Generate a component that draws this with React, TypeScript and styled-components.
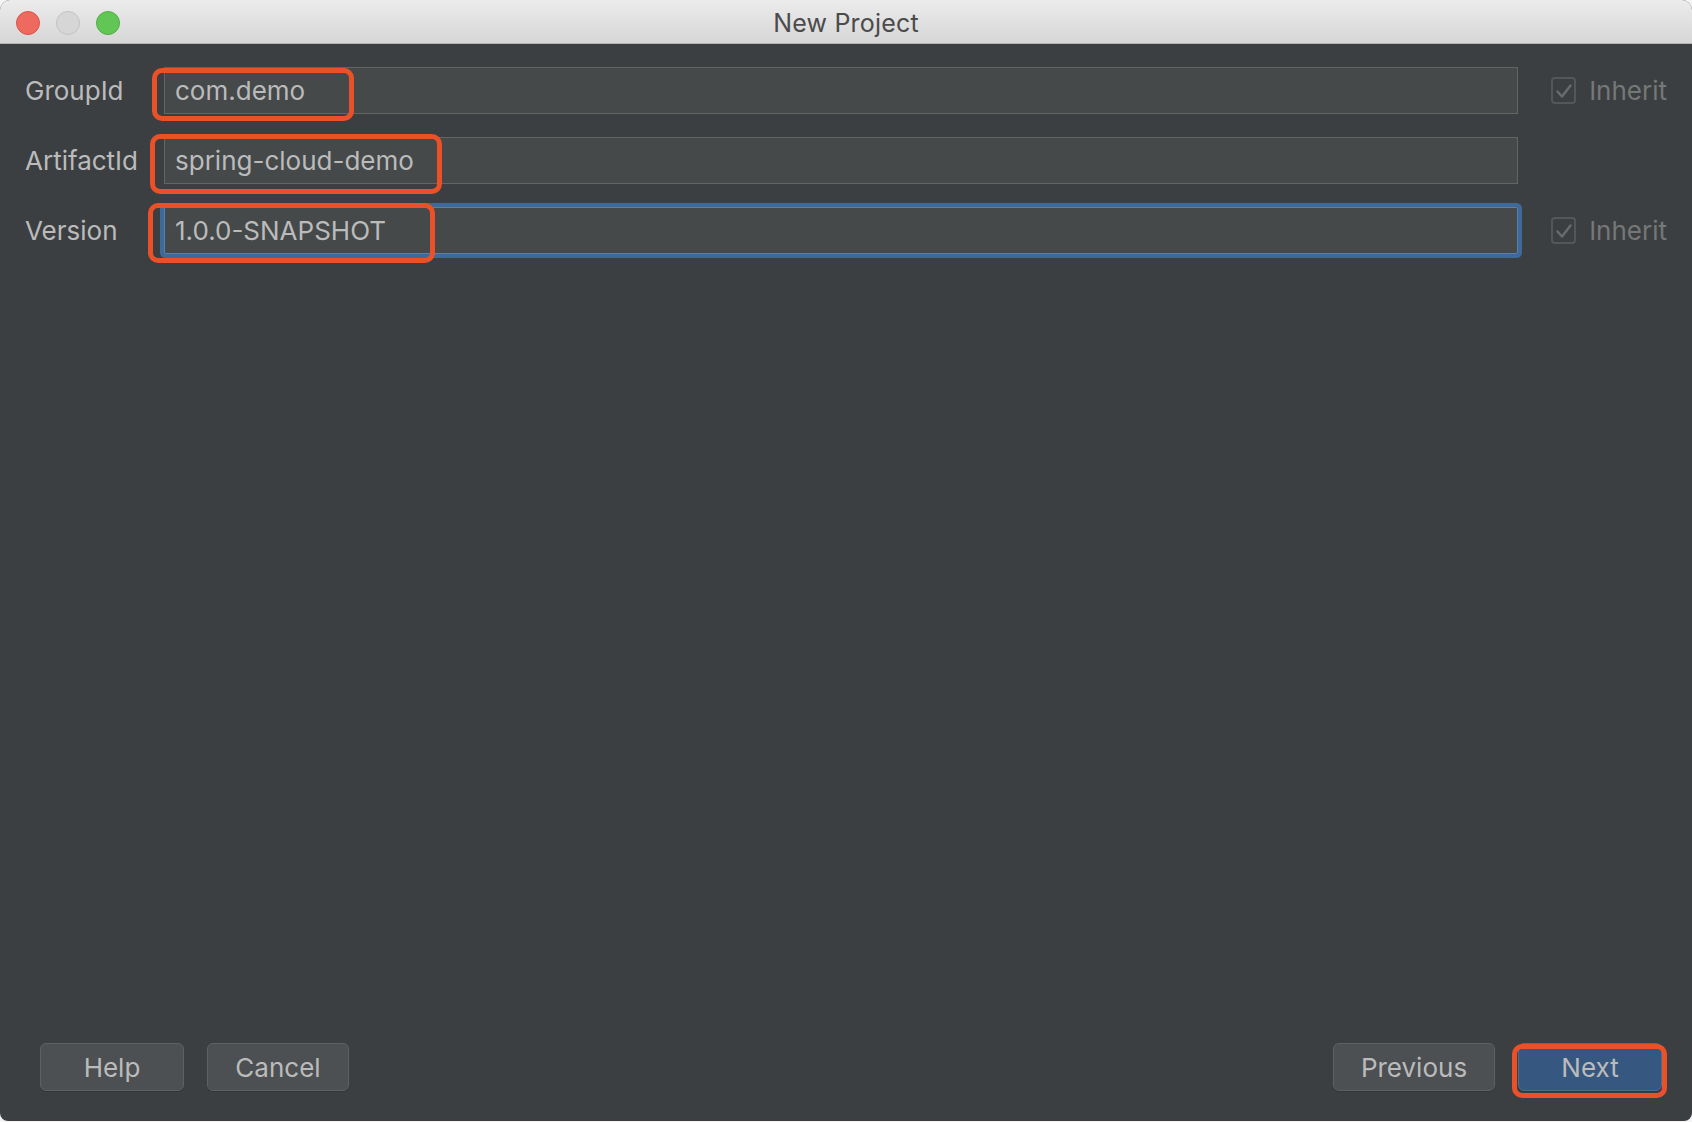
import React from "react";
import styled, { createGlobalStyle, css } from "styled-components";

const GlobalStyle = createGlobalStyle`
  html, body {
    margin: 0;
    padding: 0;
    background: #f4f4f4;
  }
  body {
    font-family: Inter, "Liberation Sans", Arial, sans-serif;
  }
  * { box-sizing: border-box; }
`;

const Window = styled.div`
  width: 1692px;
  height: 1121px;
  display: flex;
  flex-direction: column;
  background: #3c3f41;
  border-radius: 10px 10px 8px 8px;
  overflow: hidden;
`;

const TitleBar = styled.div`
  height: 44px;
  flex: none;
  display: grid;
  grid-template-columns: 1fr auto 1fr;
  align-items: center;
  padding: 2px 16px 0;
  background: linear-gradient(#ececec, #d6d6d6);
  border-bottom: 1px solid #b3b3b3;
`;

const Lights = styled.div`
  display: flex;
  gap: 16px;
`;

const Light = styled.span<{ $color: string; $border: string }>`
  width: 24px;
  height: 24px;
  border-radius: 50%;
  background: ${(p) => p.$color};
  border: 1px solid ${(p) => p.$border};
`;

const Title = styled.div`
  font-size: 25px;
  color: #4b4b4b;
  letter-spacing: 0.2px;
`;

const Body = styled.div`
  flex: 1;
  display: flex;
  flex-direction: column;
`;

const Form = styled.div`
  display: grid;
  grid-template-columns: 139px 1fr 149px;
  row-gap: 23px;
  align-items: center;
  padding: 23px 25px 0 25px;
`;

const Label = styled.div`
  font-size: 26px;
  color: #bbbbbb;
`;

const FieldWrap = styled.div`
  position: relative;
`;

const Field = styled.div<{ $focused?: boolean }>`
  height: 47px;
  display: flex;
  align-items: center;
  padding-left: 10px;
  background: #45494a;
  border: 1px solid #646464;
  color: #bbbbbb;
  font-size: 26px;
  ${(p) =>
    p.$focused &&
    css`
      border-color: #5680ad;
      box-shadow: 0 0 0 4px #3f6998;
      border-radius: 2px;
    `}
`;

const Annotation = styled.div<{ $l: number; $t: number; $w: number; $h: number }>`
  position: absolute;
  left: ${(p) => p.$l}px;
  top: ${(p) => p.$t}px;
  width: ${(p) => p.$w}px;
  height: ${(p) => p.$h}px;
  border: 5px solid #ea5129;
  border-radius: 10px;
  pointer-events: none;
`;

const InheritCell = styled.div`
  display: flex;
  align-items: center;
  padding-left: 33px;
  gap: 13px;
`;

const CheckBox = styled.span`
  width: 26px;
  height: 27px;
  border: 2px solid #54575a;
  border-radius: 4px;
  display: flex;
  align-items: center;
  justify-content: center;
`;

const InheritText = styled.span`
  font-size: 26px;
  color: #767777;
`;

const Footer = styled.div`
  margin-top: auto;
  display: flex;
  align-items: center;
  gap: 23px;
  padding: 0 30px 30px 40px;
`;

const Spacer = styled.div`
  flex: 1;
`;

const Button = styled.div<{ $w: number; $primary?: boolean }>`
  position: relative;
  width: ${(p) => p.$w}px;
  height: 48px;
  display: flex;
  align-items: center;
  justify-content: center;
  border-radius: 6px;
  font-size: 26px;
  color: #bbbbbb;
  background: ${(p) => (p.$primary ? "#365880" : "#4c5052")};
  border: 1px solid ${(p) => (p.$primary ? "#4c708c" : "#5e6163")};
  box-shadow: 0 1px 0 rgba(0, 0, 0, 0.15);
`;

const Check = () => (
  <svg width="20" height="20" viewBox="0 0 20 20">
    <path d="M3.5 10.5 L8 15.5 L16.5 4.5" fill="none" stroke="#696b6c" strokeWidth="2.4" strokeLinecap="round" strokeLinejoin="round" />
  </svg>
);

const Inherit = () => (
  <InheritCell>
    <CheckBox>
      <Check />
    </CheckBox>
    <InheritText>Inherit</InheritText>
  </InheritCell>
);

export default function App() {
  return (
    <>
      <GlobalStyle />
      <Window>
        <TitleBar>
          <Lights>
            <Light $color="#ee6a5f" $border="#d9534a" />
            <Light $color="#d6d6d6" $border="#c2c2c2" />
            <Light $color="#62c655" $border="#4fae44" />
          </Lights>
          <Title>New Project</Title>
          <div />
        </TitleBar>
        <Body>
          <Form>
            <Label>GroupId</Label>
            <FieldWrap>
              <Field>com.demo</Field>
              <Annotation $l={-12} $t={1} $w={202} $h={53} />
            </FieldWrap>
            <Inherit />

            <Label>ArtifactId</Label>
            <FieldWrap>
              <Field>spring-cloud-demo</Field>
              <Annotation $l={-14} $t={-3} $w={292} $h={60} />
            </FieldWrap>
            <div />

            <Label>Version</Label>
            <FieldWrap>
              <Field $focused>1.0.0-SNAPSHOT</Field>
              <Annotation $l={-16} $t={-4} $w={287} $h={60} />
            </FieldWrap>
            <Inherit />
          </Form>
          <Footer>
            <Button $w={144}>Help</Button>
            <Button $w={142}>Cancel</Button>
            <Spacer />
            <Button $w={162}>Previous</Button>
            <Button $w={144} $primary>
              Next
              <Annotation $l={-7} $t={0} $w={155} $h={54} />
            </Button>
          </Footer>
        </Body>
      </Window>
    </>
  );
}
